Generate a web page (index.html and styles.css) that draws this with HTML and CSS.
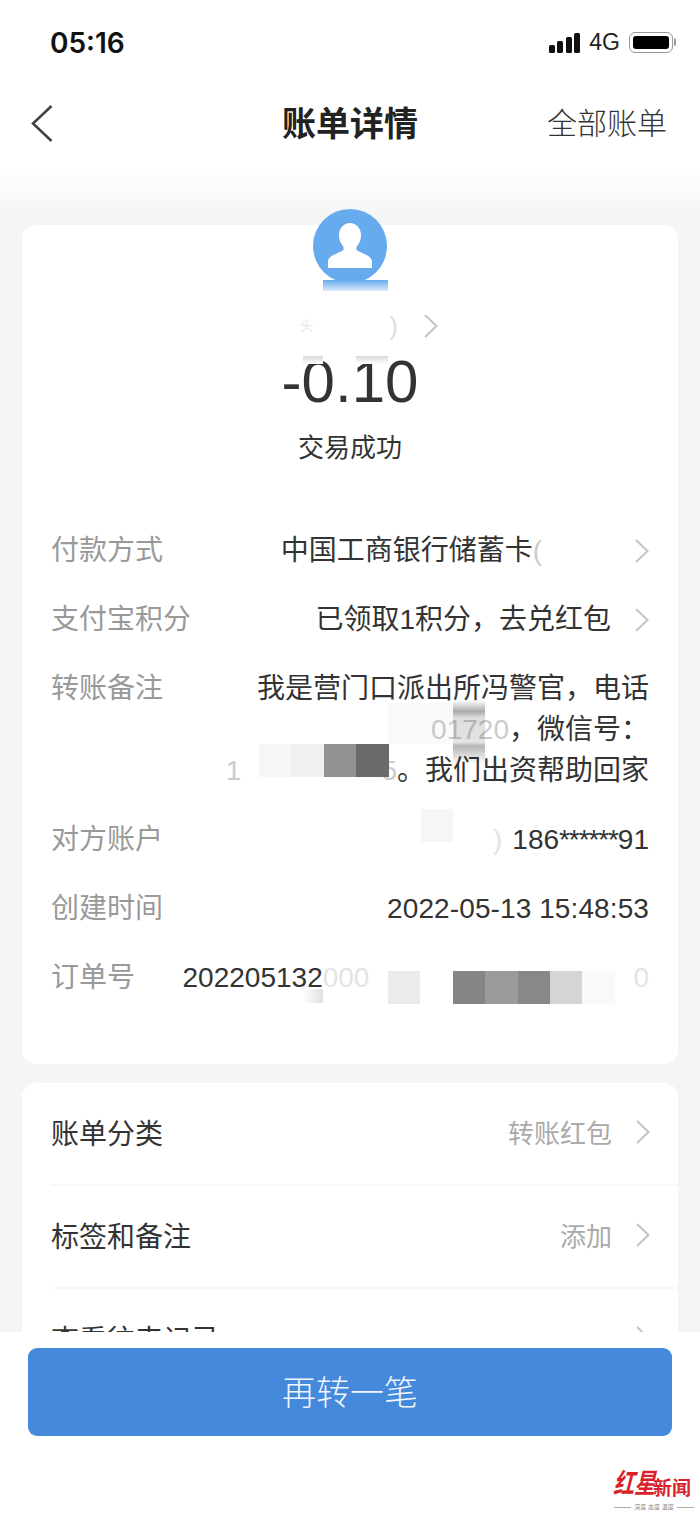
FILE: index.html
```html
<!DOCTYPE html>
<html lang="zh-CN">

<head>
    <meta charset="UTF-8">
    <meta name="viewport" content="width=device-width, initial-scale=1.0">
    <title>账单详情</title>

    <link rel="stylesheet" href="styles.css">
</head>

<body>
    <div id="page">
        <div class="status-bar">
            <span class="time">05:16</span>
            <div class="status-icons">
                <div class="signal">
                    <i class="bar-1"></i>
                    <i class="bar-2"></i>
                    <i class="bar-3"></i>
                    <i class="bar-4"></i>
                </div>
                <span class="network">4G</span>
                <div class="battery"><i></i></div>
            </div>
        </div>

        <div class="nav-bar">
            <svg class="back" viewBox="0 0 22 37" width="22" height="37">
                <path d="M20.5 1 L2 18.5 L20.5 36" fill="none" stroke="#444" stroke-width="2.6" />
            </svg>
            <h1>账单详情</h1>
            <span class="nav-link">全部账单</span>
        </div>

        <div class="content">
            <div class="card">
                <div class="summary">
                    <svg class="avatar" viewBox="0 0 74 74" width="74" height="74">
                        <circle cx="37" cy="37" r="37" fill="#67abef" />
                        <path fill="#fff"
                            d="M15 59 v-6 c0-6 8-8 14-11 c2-1 2-3 1-5 c-3-3-4-7-4-11 c0-7 5-12 11-12 s11 5 11 12 c0 4-1 8-4 11 c-1 2-1 4 1 5 c6 3 14 5 14 11 v6 z" />
                    </svg>
                    <div class="name-row">
                        <div class="name"><span class="name-start">头</span><span>)</span></div>
                        <svg class="chevron" viewBox="0 0 14 24" width="14" height="24">
                            <path d="M1 1 L12.5 12 L1 23" fill="none" stroke="#c4c4c4" stroke-width="2" />
                        </svg>
                    </div>
                    <div class="amount">-0.10</div>
                    <div class="state">交易成功</div>
                </div>

                <div class="row">
                    <span class="label">付款方式</span>
                    <div class="value value-link">
                        <span class="bank">中国工商银行储蓄卡<span class="faint">(</span></span>
                        <svg class="chevron" viewBox="0 0 14 24" width="14" height="24">
                            <path d="M1 1 L12.5 12 L1 23" fill="none" stroke="#c4c4c4" stroke-width="2" />
                        </svg>
                    </div>
                </div>
                <div class="row">
                    <span class="label">支付宝积分</span>
                    <div class="value value-link">
                        <span>已领取1积分，去兑红包</span>
                        <svg class="chevron" viewBox="0 0 14 24" width="14" height="24">
                            <path d="M1 1 L12.5 12 L1 23" fill="none" stroke="#c4c4c4" stroke-width="2" />
                        </svg>
                    </div>
                </div>
                <div class="row">
                    <span class="label">转账备注</span>
                    <div class="value note">
                        <div>我是营门口派出所冯警官，电话</div>
                        <div><span class="faint">01720</span>，微信号：</div>
                        <div><span class="faint">1</span><span class="note-gap"></span><span class="faint">5</span>。我们出资帮助回家</div>
                    </div>
                </div>
                <div class="row">
                    <span class="label">对方账户</span>
                    <div class="value"><span class="fainter">)</span><span class="account">186<span class="stars">******</span>91</span></div>
                </div>
                <div class="row">
                    <span class="label">创建时间</span>
                    <div class="value date">2022-05-13 15:48:53</div>
                </div>
                <div class="row">
                    <span class="label">订单号</span>
                    <div class="value order">202205132<span class="fainter">000</span><span class="order-gap"></span><span class="fainter">0</span></div>
                </div>
            </div>

            <div class="card card-list">
                <div class="list-row">
                    <span>账单分类</span>
                    <div class="list-value">
                        <span>转账红包</span>
                        <svg class="chevron" viewBox="0 0 14 24" width="14" height="24">
                            <path d="M1 1 L12.5 12 L1 23" fill="none" stroke="#c4c4c4" stroke-width="2" />
                        </svg>
                    </div>
                </div>
                <div class="list-row">
                    <span>标签和备注</span>
                    <div class="list-value">
                        <span>添加</span>
                        <svg class="chevron" viewBox="0 0 14 24" width="14" height="24">
                            <path d="M1 1 L12.5 12 L1 23" fill="none" stroke="#c4c4c4" stroke-width="2" />
                        </svg>
                    </div>
                </div>
                <div class="list-row">
                    <span>查看往来记录</span>
                    <div class="list-value">
                        <svg class="chevron" viewBox="0 0 14 24" width="14" height="24">
                            <path d="M1 1 L12.5 12 L1 23" fill="none" stroke="#c4c4c4" stroke-width="2" />
                        </svg>
                    </div>
                </div>
            </div>
        </div>

        <div class="footer">
            <button>再转一笔</button>
        </div>

        <!-- blurred out parts of the photo -->
        <div class="avatar-smear"></div>
        <div class="smudge smudge-a"></div>
        <div class="smudge smudge-b"></div>
        <div class="order-smudge"></div>
        <div class="note-tile"></div>
        <div class="note-column"></div>
        <div class="mosaic mosaic-note">
            <i class="m-f6"></i>
            <i class="m-f0"></i>
            <i class="m-92"></i>
            <i class="m-6a"></i>
        </div>
        <div class="mosaic mosaic-account">
            <i class="m-f6"></i>
        </div>
        <div class="mosaic mosaic-order">
            <i class="m-eb"></i>
            <i></i>
            <i class="m-85"></i>
            <i class="m-9a"></i>
            <i class="m-88"></i>
            <i class="m-d5"></i>
            <i class="m-f9"></i>
        </div>

        <div class="watermark">
            <div class="watermark-name"><span class="star">红星</span><span class="news">新闻</span></div>
            <div class="watermark-tag">深度 态度 温度</div>
        </div>
    </div>
</body>

</html>
```

FILE: styles.css
```css
* {
    box-sizing: border-box;
}

body {
    margin: 0;
    background-color: #fff;
    color: #333;
    font-family: "Liberation Sans", "Noto Sans CJK SC", sans-serif;
}

#page {
    position: relative;
    display: flex;
    flex-direction: column;
    width: 700px;
    height: 1516px;
    overflow: hidden;
}

/* status bar */
.status-bar {
    display: flex;
    justify-content: space-between;
    align-items: center;
    height: 85px;
    padding: 0 27px 0 50px;
}

.time {
    color: #111;
    font-family: Inter, sans-serif;
    font-size: 28px;
    font-weight: 600;
}

.status-icons {
    display: flex;
    align-items: center;
    gap: 9px;
}

.signal {
    display: flex;
    align-items: flex-end;
    gap: 2.5px;
    height: 20px;
}

.signal i {
    width: 6px;
    border-radius: 1.5px;
    background-color: #111;
}

.bar-1 {
    height: 8px;
}

.bar-2 {
    height: 12px;
}

.bar-3 {
    height: 16px;
}

.bar-4 {
    height: 20px;
}

.network {
    color: #222;
    font-size: 23px;
}

.battery {
    position: relative;
    width: 44px;
    height: 21px;
    padding: 3px;
    border: 1.5px solid #999;
    border-radius: 6px;
}

.battery i {
    display: block;
    height: 100%;
    border-radius: 3px;
    background-color: #000;
}

.battery::after {
    content: "";
    position: absolute;
    top: 5px;
    right: -4px;
    width: 2px;
    height: 8px;
    border-radius: 0 2px 2px 0;
    background-color: #999;
}

/* nav */
.nav-bar {
    display: flex;
    justify-content: space-between;
    align-items: center;
    position: relative;
    height: 80px;
    padding: 0 33px 4px 31px;
}

.nav-bar h1 {
    position: absolute;
    left: 0;
    right: 0;
    margin: 0 0 4px;
    color: #222;
    font-size: 34px;
    font-weight: 700;
    text-align: center;
}

.nav-link {
    margin-bottom: 4px;
    color: #333;
    font-size: 30px;
    font-weight: 300;
}

/* cards */
.content {
    flex: 1;
    min-height: 0;
    overflow: hidden;
    padding: 60px 22px 0;
    background: linear-gradient(#fff 0, #f5f5f5 50px);
}

.card {
    padding: 0 29px 52px;
    border-radius: 14px;
    background-color: #fff;
}

.summary {
    display: flex;
    flex-direction: column;
    align-items: center;
    height: 291px;
}

.avatar {
    flex-shrink: 0;
    margin-top: -16px;
}

.name-row {
    display: flex;
    align-items: center;
    gap: 26px;
    height: 34px;
    margin: 26px 0 0 38px;
}

.name {
    display: flex;
    justify-content: space-between;
    width: 98px;
    color: #ddd;
    font-size: 26px;
    line-height: 34px;
}

.name-start {
    color: #e6e6e6;
    font-size: 13px;
}

.amount {
    height: 70px;
    margin-top: 4px;
    color: #333;
    font-size: 60px;
    line-height: 70px;
}

.state {
    margin-top: 14px;
    color: #333;
    font-size: 26px;
    line-height: 34px;
}

.row {
    display: flex;
    justify-content: space-between;
    padding: 14px 0;
    font-size: 28px;
    line-height: 41px;
}

.label {
    flex-shrink: 0;
    color: #999;
}

.value {
    color: #333;
    text-align: right;
}

.value-link {
    display: flex;
    align-items: center;
    gap: 24px;
}

.bank {
    margin-right: 69px;
    white-space: nowrap;
}

.faint {
    color: #ccc;
}

.fainter {
    color: #e4e4e4;
}

.note-gap {
    display: inline-block;
    width: 140px;
}

.account {
    margin-left: 10px;
}

.stars {
    letter-spacing: -1.1px;
}

.date {
    letter-spacing: 0.1px;
}

.order-gap {
    display: inline-block;
    width: 264px;
}

.chevron {
    flex-shrink: 0;
}

.card-list {
    height: 320px;
    margin-top: 19px;
    padding: 0 0 0 29px;
}

.list-row {
    display: flex;
    justify-content: space-between;
    align-items: center;
    height: 103px;
    padding: 0 28px 4px 0;
    border-bottom: 2px solid #f8f8f8;
    color: #333;
    font-size: 28px;
}

.list-value {
    display: flex;
    align-items: center;
    gap: 24px;
    color: #aaa;
    font-size: 26px;
}

/* bottom button */
.footer {
    flex-shrink: 0;
    height: 184px;
    padding: 16px 28px 0;
    background-color: #fff;
}

.footer button {
    width: 100%;
    height: 88px;
    padding: 0 0 4px;
    border: none;
    border-radius: 9px;
    background-color: #4589dc;
    color: #eef5fb;
    font-family: inherit;
    font-size: 34px;
    font-weight: 300;
}

/* mosaic patches sitting over the text */
.avatar-smear {
    position: absolute;
    left: 323px;
    top: 280px;
    width: 65px;
    height: 11px;
    background: linear-gradient(#67abef, #dceafa);
}

.smudge {
    position: absolute;
    top: 356px;
    height: 8px;
    background: linear-gradient(#d8d8d8, #fff);
}

.smudge-a {
    left: 303px;
    width: 20px;
}

.smudge-b {
    left: 356px;
    width: 32px;
}

.order-smudge {
    position: absolute;
    left: 303px;
    top: 989px;
    width: 20px;
    height: 14px;
    background: linear-gradient(to right, rgba(0, 0, 0, 0), rgba(0, 0, 0, 0.12));
}

.note-tile {
    position: absolute;
    left: 388px;
    top: 703px;
    width: 65px;
    height: 41px;
    background-color: rgba(0, 0, 0, 0.02);
}

.note-column {
    position: absolute;
    left: 453px;
    top: 700px;
    width: 32px;
    height: 64px;
    background: linear-gradient(rgba(0, 0, 0, 0) 0, rgba(0, 0, 0, 0.33) 18%, rgba(0, 0, 0, 0.13) 28%, rgba(0, 0, 0, 0.11) 66%, rgba(0, 0, 0, 0.29) 72%, rgba(0, 0, 0, 0) 100%);
}

.mosaic {
    position: absolute;
    display: flex;
}

.mosaic i {
    width: 32.4px;
    height: 33px;
}

.mosaic-note {
    left: 259px;
    top: 744px;
}

.mosaic-account {
    left: 421px;
    top: 809px;
}

.mosaic-order {
    left: 388px;
    top: 971px;
}

.m-f6 {
    background-color: #f6f6f6;
}

.m-f0 {
    background-color: #f0f0f0;
}

.m-92 {
    background-color: #929292;
}

.m-6a {
    background-color: #6a6a6a;
}

.m-eb {
    background-color: #ebebeb;
}

.m-85 {
    background-color: #858585;
}

.m-9a {
    background-color: #9a9a9a;
}

.m-88 {
    background-color: #888;
}

.m-d5 {
    background-color: #d5d5d5;
}

.m-f9 {
    background-color: #f9f9f9;
}

/* watermark */
.watermark {
    position: absolute;
    left: 614px;
    top: 1473px;
    width: 80px;
}

.watermark-name {
    display: flex;
    align-items: flex-end;
    height: 28px;
    color: #d9222a;
    white-space: nowrap;
}

.star {
    display: inline-block;
    margin-left: -3px;
    font-size: 21px;
    font-weight: 700;
    transform: skewX(-14deg) scaleY(1.3);
    transform-origin: bottom;
}

.news {
    font-size: 19px;
    font-weight: 700;
    line-height: 24px;
}

.watermark-tag {
    display: flex;
    align-items: center;
    gap: 3px;
    margin-top: 2px;
    color: #888;
    font-size: 6px;
    line-height: 9px;
    white-space: nowrap;
}

.watermark-tag::before,
.watermark-tag::after {
    content: "";
    flex: 1;
    height: 1px;
    background-color: #aaa;
}
```
